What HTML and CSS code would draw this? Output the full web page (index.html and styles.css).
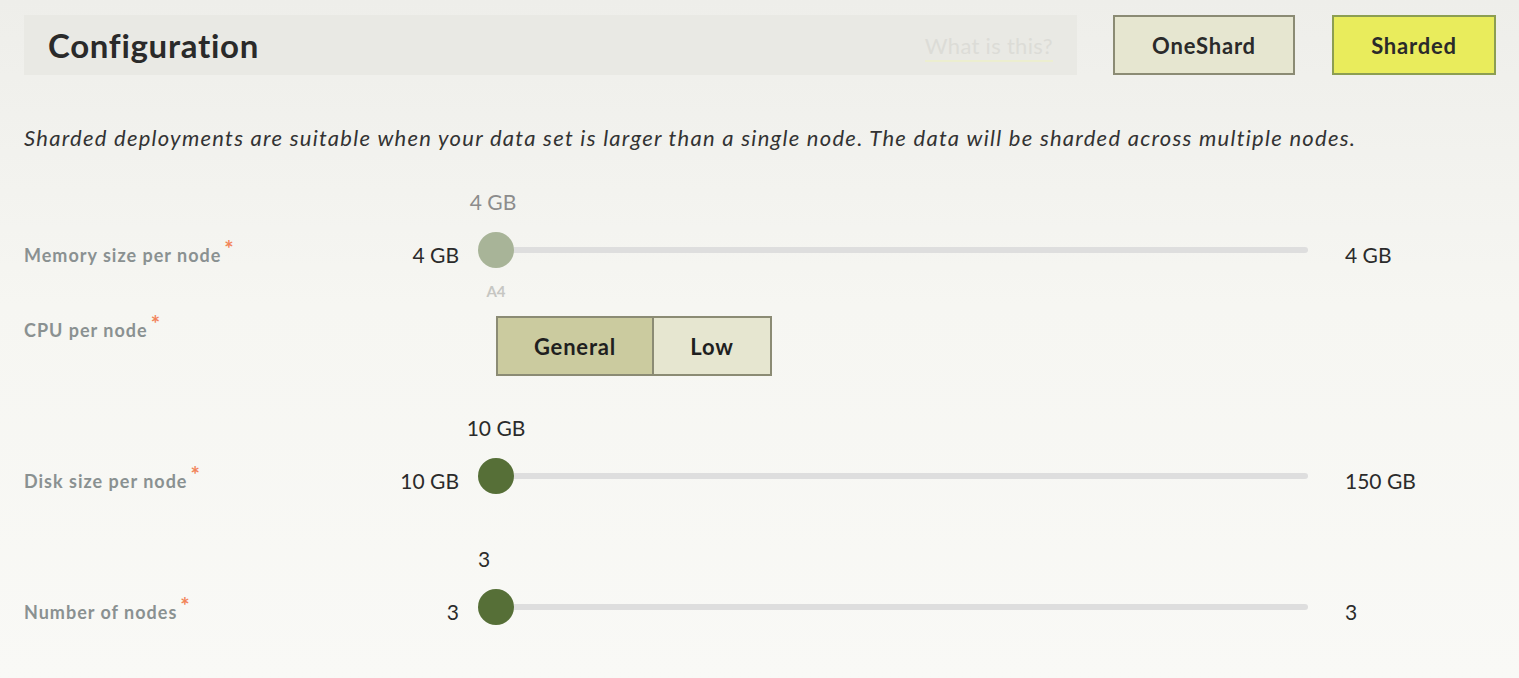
FILE: index.html
```html
<!DOCTYPE html>
<html lang="en">
<head>
<meta charset="utf-8">
<title>Configuration</title>
<link rel="stylesheet" href="styles.css">
</head>
<body>
<main class="page">
  <header class="head">
    <div class="title-bar">
      <h1 class="title">Configuration</h1>
      <a class="help" href="#">What is this?</a>
    </div>
    <button class="mode">OneShard</button>
    <button class="mode mode-active">Sharded</button>
  </header>

  <p class="desc">Sharded deployments are suitable when your data set is larger than a single node. The data will be sharded across multiple nodes.</p>

  <section class="row row-mem">
    <div class="top-val top-mem"><span class="muted">4 GB</span></div>
    <div class="label">Memory size per node<span class="req">*</span></div>
    <div class="min">4 GB</div>
    <div class="track"><span class="thumb thumb-off"></span></div>
    <div class="max">4 GB</div>
    <div class="sub">A4</div>
  </section>

  <section class="cpu">
    <div class="label">CPU per node<span class="req">*</span></div>
    <div class="seg">
      <button class="seg-btn seg-on">General</button>
      <button class="seg-btn seg-low">Low</button>
    </div>
  </section>

  <section class="row row-disk">
    <div class="top-val"><span>10 GB</span></div>
    <div class="label">Disk size per node<span class="req">*</span></div>
    <div class="min">10 GB</div>
    <div class="track"><span class="thumb"></span></div>
    <div class="max">150 GB</div>
  </section>

  <section class="row row-nodes">
    <div class="top-val top-nodes"><span>3</span></div>
    <div class="label">Number of nodes<span class="req">*</span></div>
    <div class="min">3</div>
    <div class="track"><span class="thumb"></span></div>
    <div class="max">3</div>
  </section>
</main>
</body>
</html>
```

FILE: styles.css
```css
* { box-sizing: border-box; }

html, body {
  margin: 0;
  height: 100%;
}

body {
  font-family: Lato, "Open Sans", sans-serif;
  color: #2b2b2b;
  background: linear-gradient(180deg, #eeeeea 0%, #f6f6f2 45%, #f9f9f6 100%);
  min-height: 678px;
}

.page {
  padding: 15px 23px 0 24px;
}

.head {
  display: flex;
  align-items: stretch;
  height: 60px;
}

.title-bar {
  flex: 0 0 1053px;
  background: #e9e9e4;
  display: flex;
  align-items: center;
  justify-content: space-between;
  padding: 0 24px 0 24px;
}

.title {
  margin: 0;
  font-size: 33px;
  font-weight: 700;
  color: #2a2a2a;
  letter-spacing: 0.7px;
}

.help {
  font-size: 22px;
  letter-spacing: 0.3px;
  color: #dcdcd7;
  text-decoration: none;
  border-bottom: 2px solid #eceed0;
  padding-bottom: 1px;
  margin-top: 4px;
}

.mode {
  font-family: inherit;
  font-size: 22px;
  letter-spacing: 0.8px;
  font-weight: 700;
  color: #2a2a2a;
  background: #e6e6d0;
  border: 2px solid #8b8b74;
  margin: 0 0 0 36px;
  width: 182px;
  padding: 0;
  cursor: pointer;
}

.mode-active {
  background: #e9ec5c;
  border-color: #8c9e52;
  width: 164px;
  margin-left: 37px;
}

.desc {
  margin: 49px 0 0 0;
  font-size: 22px;
  line-height: 28px;
  letter-spacing: 1.26px;
  font-style: italic;
  color: #333;
  white-space: nowrap;
}

.row {
  display: grid;
  grid-template-columns: 330px 105px 849px 1fr;
  grid-template-rows: 24px 36px;
  row-gap: 17px;
  align-items: center;
}

.row-mem { margin-top: 39px; grid-template-rows: 24px 36px 18px; }
.row-disk { margin-top: 42px; }
.row-nodes { margin-top: 54px; }

.top-val {
  grid-column: 3;
  grid-row: 1;
  width: 36px;
  display: flex;
  justify-content: center;
  white-space: nowrap;
  font-size: 21px;
  line-height: 24px;
  margin-left: 19px;
  padding-bottom: 2px;
}

.top-mem { margin-left: 16px; }
.top-nodes { margin-left: 7px; }

.muted { color: #8c8c8c; }

.label {
  font-size: 18px;
  font-weight: 700;
  color: #8a9191;
  line-height: 20px;
  letter-spacing: 1px;
  white-space: nowrap;
}

.row .label {
  grid-column: 1;
  grid-row: 2;
  padding-top: 10px;
}

.req {
  color: #f2845a;
  font-size: 22px;
  font-weight: 700;
  line-height: 0;
  vertical-align: 5px;
  margin-left: 3px;
}

.min, .max {
  grid-row: 2;
  font-size: 21px;
  line-height: 24px;
  padding-top: 10px;
  white-space: nowrap;
}

.min {
  grid-column: 2;
  text-align: right;
}

.max {
  grid-column: 4;
  padding-left: 37px;
}

.track {
  grid-column: 3;
  grid-row: 2;
  margin-left: 19px;
  height: 36px;
  position: relative;
  display: flex;
  align-items: center;
}

.track::before {
  content: "";
  display: block;
  flex: 1;
  height: 6px;
  border-radius: 3px;
  background: #dedede;
  margin-left: 18px;
}

.thumb {
  position: absolute;
  left: 0;
  top: 0;
  width: 36px;
  height: 36px;
  border-radius: 50%;
  background: #566f37;
}

.thumb-off { background: #a8b498; }

.sub {
  grid-column: 3;
  grid-row: 3;
  width: 36px;
  margin-left: 19px;
  text-align: center;
  font-size: 15px;
  font-weight: 700;
  color: #c6c6c2;
  align-self: start;
  margin-top: -3px;
}

.cpu {
  display: flex;
  margin-top: 13px;
  height: 59px;
}

.cpu .label {
  width: 472px;
  padding-top: 4px;
}

.seg {
  display: flex;
  border: 2px solid #8b8b74;
  height: 60px;
}

.seg-btn {
  font-family: inherit;
  font-size: 22px;
  letter-spacing: 0.8px;
  font-weight: 700;
  color: #1f1f1f;
  border: 0;
  padding: 0;
  cursor: pointer;
}

.seg-on {
  width: 156px;
  background: #cbcb9f;
  border-right: 2px solid #8b8b74;
}

.seg-low {
  width: 116px;
  background: #e6e6d0;
}
```
